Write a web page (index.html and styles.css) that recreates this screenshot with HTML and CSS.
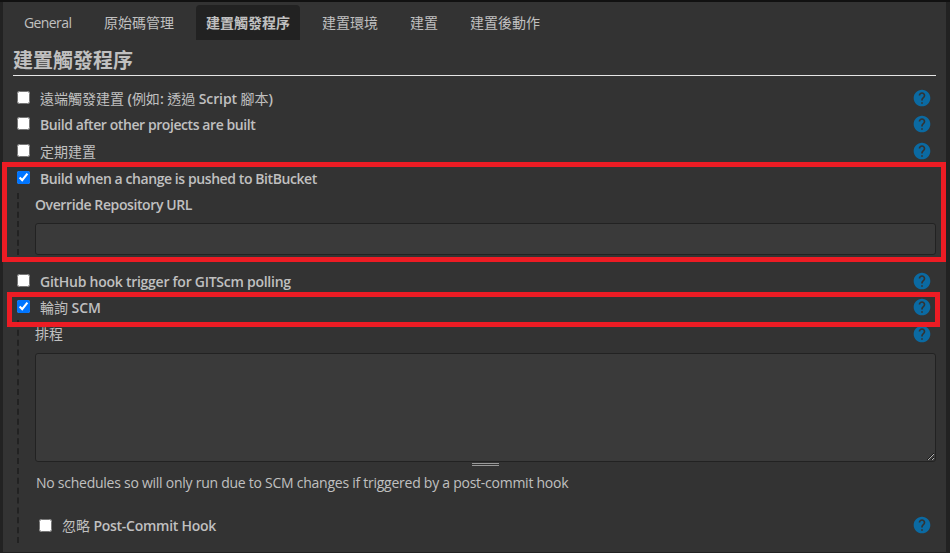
FILE: index.html
```html
<!DOCTYPE html>
<html lang="zh-Hant">
<head>
<meta charset="utf-8">
<title>建置觸發程序</title>
<link rel="stylesheet" href="styles.css">
</head>
<body>
<svg class="defs" width="0" height="0"><defs>
  <symbol id="help" viewBox="0 0 24 24"><path d="M12 2C6.48 2 2 6.48 2 12s4.480 10 10 10 10-4.480 10-10S17.520 2 12 2zm1 17h-2v-2h2v2zm2.070-7.750l-.9.920C13.450 12.900 13 13.500 13 15h-2v-.5c0-1.100.450-2.100 1.170-2.830l1.240-1.260c.370-.360.590-.860.590-1.410 0-1.100-.9-2-2-2s-2 .9-2 2H8c0-2.210 1.790-4 4-4s4 1.790 4 4c0 .880-.360 1.680-.930 2.250z"/></symbol>
</defs></svg>
<main class="panel">
  <nav class="tabs">
    <a class="tab tab-general">General</a>
    <a class="tab">原始碼管理</a>
    <a class="tab active">建置觸發程序</a>
    <a class="tab">建置環境</a>
    <a class="tab">建置</a>
    <a class="tab">建置後動作</a>
  </nav>
  <h1>建置觸發程序</h1>
  <form>
    <div class="row"><input type="checkbox"><label class="loose"><span class="zh">遠端觸發建置</span> (<span class="zh">例如</span>: <span class="zh">透過</span> Script <span class="zh">腳本</span>)</label><svg class="help"><use href="#help"/></svg></div>
    <div class="row after"><input type="checkbox"><label class="tight">Build after other projects are built</label><svg class="help"><use href="#help"/></svg></div>
    <div class="row"><input type="checkbox"><label><span class="zh">定期建置</span></label><svg class="help"><use href="#help"/></svg></div>
    <section class="option">
      <div class="row push"><input type="checkbox" checked><label class="tight">Build when a change is pushed to BitBucket</label></div>
      <div class="nested url-group">
        <div class="field-title"><span>Override Repository URL</span></div>
        <input type="text" class="field">
      </div>
      <div class="mark mark-push"></div>
    </section>
    <div class="row"><input type="checkbox"><label>GitHub hook trigger for GITScm polling</label><svg class="help"><use href="#help"/></svg></div>
    <section class="option">
      <div class="row"><input type="checkbox" checked><label class="loose"><span class="zh">輪詢</span> SCM</label><svg class="help"><use href="#help"/></svg></div>
      <div class="mark mark-poll"></div>
    </section>
    <div class="nested schedule-group">
      <div class="field-title"><span class="zh">排程</span><svg class="help"><use href="#help"/></svg></div>
      <textarea class="field area"></textarea>
      <div class="grip"></div>
      <p class="note">No schedules so will only run due to SCM changes if triggered by a post-commit hook</p>
      <div class="row hook"><input type="checkbox"><label><span class="zh">忽略</span> Post-Commit Hook</label><svg class="help"><use href="#help"/></svg></div>
    </div>
  </form>
</main>
</body>
</html>
```
FILE: styles.css
```css
* { box-sizing: border-box; }
body {
  margin: 0;
  height: 553px;
  overflow: hidden;
  background: #222;
  border-top: 2px solid #111;
  color: #c0c0c0;
  font: 14px/20px "Open Sans", "Noto Sans CJK TC", sans-serif;
}
.defs { display: none; }
.panel {
  height: 550px;
  margin: 0 4px 0 3px;
  padding: 3px 10px 0;
  background: #333;
}
.tabs { display: flex; gap: 12px; padding-left: 1px; }
.tab {
  height: 35px;
  padding: 0 10px;
  line-height: 36px;
  border-radius: 4px 4px 0 0;
  white-space: nowrap;
}
.tab-general { width: 68px; letter-spacing: -0.6px; }
.tab.active { background: #222; font-weight: 700; }
h1 {
  height: 36px;
  margin: 0 0 9px;
  border-bottom: 1px solid #e6e6e6;
  font-size: 20px;
  font-weight: 700;
  line-height: 41px;
}
.row { display: flex; height: 26px; align-items: center; padding: 0 5px 0 4px; }
.row.after { margin-bottom: 1px; }
.row.push { height: 27px; padding-top: 1px; }
input[type="checkbox"] { flex: none; width: 13px; height: 13px; margin: 0 10px 2px 0; }
label { font-weight: 600; white-space: nowrap; padding-top: 2px; letter-spacing: -0.26px; }
label.tight { letter-spacing: -0.42px; }
label.loose { letter-spacing: -0.1px; }
.zh, .loose .zh { font-weight: 400; letter-spacing: 0; }
.help { display: block; flex: none; width: 20px; height: 20px; margin-left: auto; margin-right: -1px; fill: #0b6aa2; }
.option { position: relative; }
.mark { position: absolute; border: 5px solid #ed1c24; pointer-events: none; }
.mark-push { top: -2px; left: -11px; right: -10px; height: 100px; }
.mark-poll { top: -2px; left: -6px; right: -4px; height: 35px; }
.nested { margin-left: 4px; padding-left: 16px; border-left: 2px dashed #222; }
.url-group { height: 62px; margin-top: 2px; margin-bottom: 13px; }
.field-title { display: flex; height: 30px; padding: 0 5px 6px 0; align-items: center; font-weight: 600; letter-spacing: -0.4px; }
.field {
  display: block;
  width: 100%;
  height: 32px;
  margin: 0;
  background: #3a3a3a;
  border: 1px solid #222;
  border-radius: 3px;
}
.schedule-group { height: 223px; }
.schedule-group .field-title { height: 33px; padding-bottom: 5px; }
.area { height: 109px; resize: vertical; }
.grip { width: 27px; height: 3px; margin: 1px auto 0; border: solid #999; border-width: 1px 0; }
.note { margin: 7px 0 0 1px; white-space: nowrap; letter-spacing: -0.255px; }
.hook { margin-top: 19px; }
.hook input[type="checkbox"] { margin-bottom: 0; }
```
